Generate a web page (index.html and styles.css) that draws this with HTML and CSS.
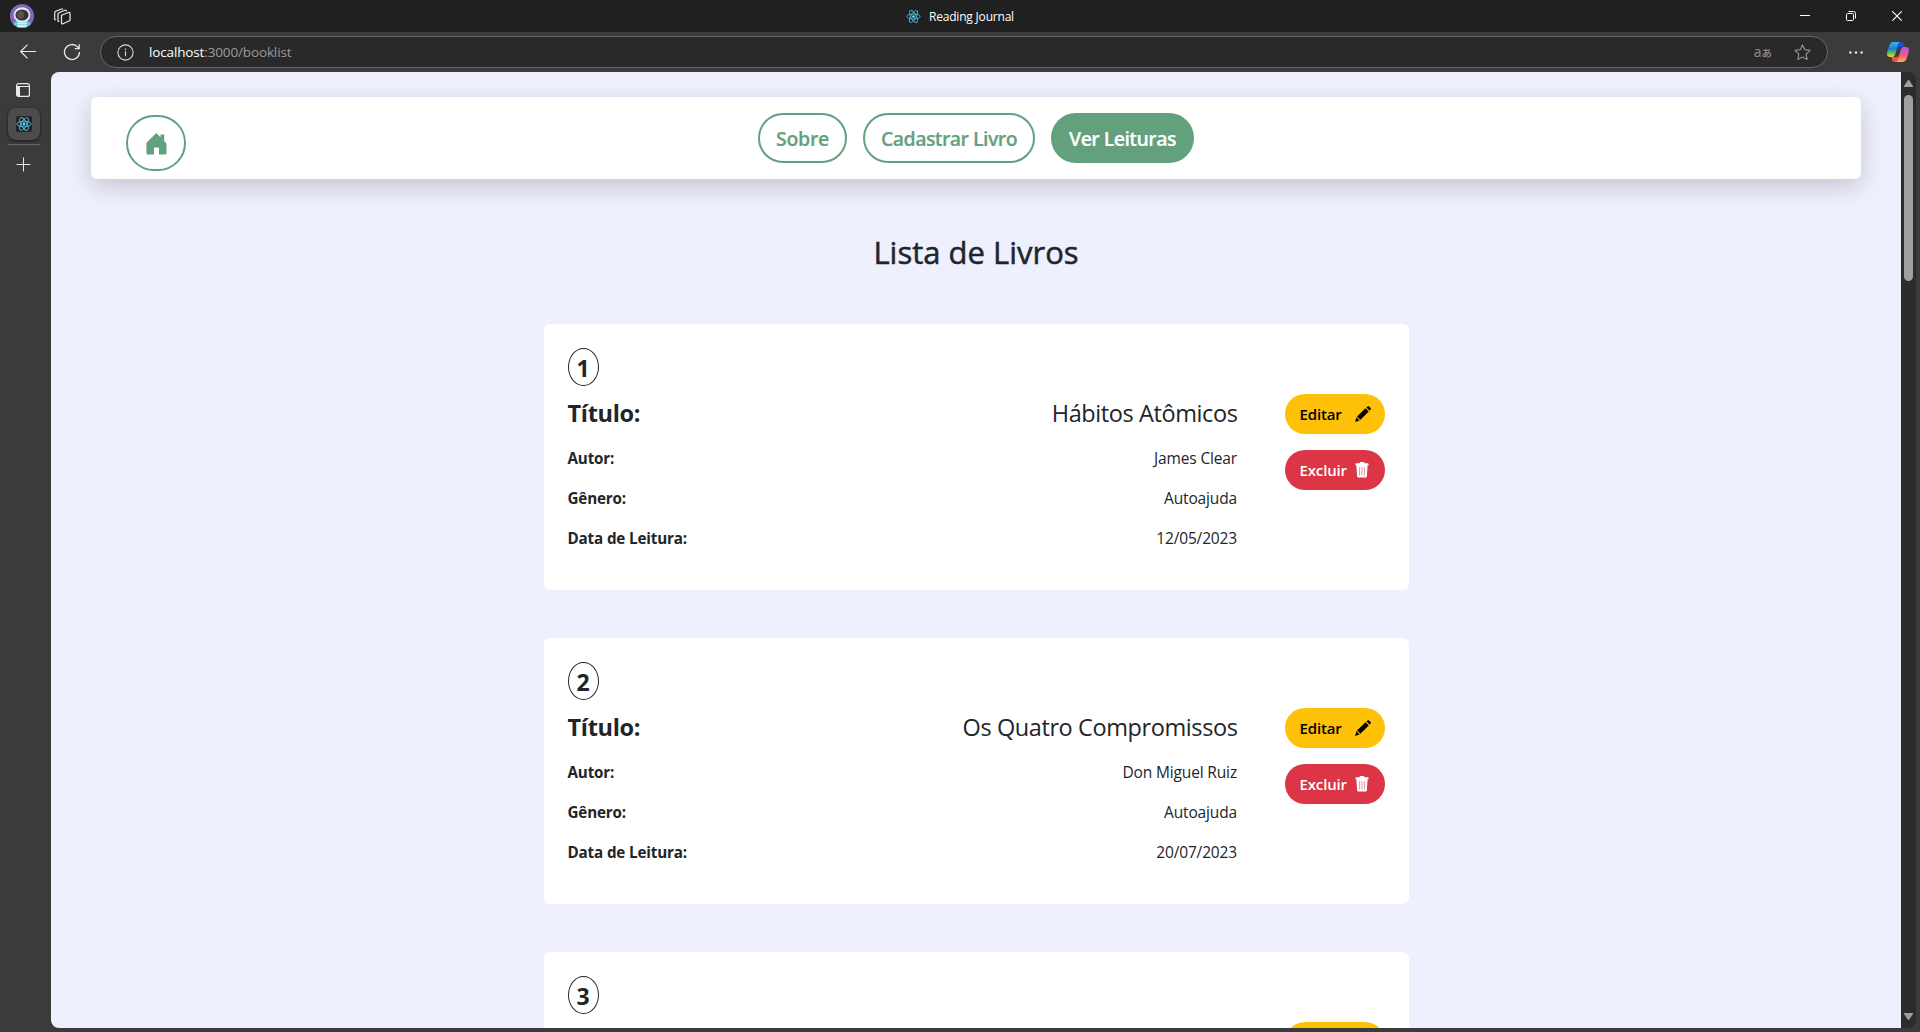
FILE: index.html
```html
<!DOCTYPE html>
<html lang="pt-BR">
<head>
<meta charset="utf-8">
<title>Reading Journal</title>
<link rel="stylesheet" href="styles.css">
</head>
<body>
<svg width="0" height="0" class="defs" aria-hidden="true">
  <symbol id="react" viewBox="0 0 24 24">
    <g fill="none" stroke="#4fb3cf" stroke-width="1.5">
      <ellipse cx="12" cy="12" rx="10.6" ry="4.2"/>
      <ellipse cx="12" cy="12" rx="10.6" ry="4.2" transform="rotate(60 12 12)"/>
      <ellipse cx="12" cy="12" rx="10.6" ry="4.2" transform="rotate(120 12 12)"/>
    </g>
    <circle cx="12" cy="12" r="2.2" fill="#61dafb"/>
  </symbol>
  <symbol id="pencil" viewBox="0 0 16 16">
    <path d="M11.400 1.500 12.600.4q.7-.7 1.400 0l1.700 1.700q.6.7 0 1.300l-1.200 1.200zM10.500 2.300l3.300 3.300L5.400 13.700 2 10.400zM1.400 11.200 4.600 14.400 .1 16z"/>
  </symbol>
  <symbol id="trash" viewBox="0 0 14 16">
    <path d="M4.500 1.200Q4.600 0 5.600 0H8.400Q9.400 0 9.500 1.200H12.600Q13.600 1.200 13.600 2.200V3.200H.4V2.200Q.4 1.200 1.400 1.200zM1.400 3.200H12.600L11.900 14.300Q11.800 15.600 10.500 15.600H3.500Q2.200 15.600 2.100 14.300z"/>
    <path d="M4.600 5.200V13.500M7 5.200V13.500M9.400 5.200V13.500" stroke="#e58a96" stroke-width=".9"/>
  </symbol>
</svg>

<header class="titlebar">
  <div class="titlebar-left">
    <svg width="24" height="24" viewBox="0 0 24 24">
      <clipPath id="round"><circle cx="12" cy="12" r="12"/></clipPath>
      <g clip-path="url(#round)">
        <rect width="24" height="24" fill="#8a63b8"/>
        <path d="M1 24Q3 16 12 16T23 24z" fill="#62c5d8"/>
        <ellipse cx="12" cy="11" rx="8.300" ry="7.700" fill="#d6f2f7"/>
        <ellipse cx="12" cy="11" rx="6.600" ry="5.500" fill="#353433"/>
        <ellipse cx="10.500" cy="11" rx="3.400" ry="4" fill="#5b514e"/>
        <path d="M7 19.500H17M7.500 22H16.500" stroke="#c6f1f7" stroke-width="1.800"/>
      </g>
    </svg>
    <svg width="17" height="17" viewBox="0 0 17 17" fill="none" stroke="#e8e8e8" stroke-width="1.200" stroke-linejoin="round">
      <path d="M7.500 7.200 14.500 4.500Q16 4 16 5.500V12.500L9 15.800Q7.500 16.300 7.500 15z"/>
      <path d="M12.300 3.400V2.800Q12 2 11 2.300L5 4.700Q4 5.200 4 6.200V13.300L5.300 13.800"/>
      <path d="M8.800 1.700Q8.600.5 7.500 1L1.800 3.200Q.7 3.700.7 4.800V11.500L2 12"/>
    </svg>
  </div>
  <div class="titlebar-title">
    <svg width="15" height="15"><use href="#react"/></svg>
    <span>Reading Journal</span>
  </div>
  <div class="window-controls">
    <svg width="10" height="10" viewBox="0 0 10 10"><path d="M0 4.500H10" stroke="#fff"/></svg>
    <svg width="10" height="10" viewBox="0 0 10 10" fill="none" stroke="#fff"><rect x=".5" y="2.500" width="7" height="7" rx="1"/><path d="M2.500.5H7.500Q9.500.5 9.500 2.500V7.500"/></svg>
    <svg width="10" height="10" viewBox="0 0 10 10"><path d="M.3.3 9.700 9.700M9.700.3.3 9.700" stroke="#fff" stroke-width="1.100"/></svg>
  </div>
</header>

<div class="toolbar">
  <svg width="16" height="16" viewBox="0 0 16 16" fill="none" stroke="#e8e8e8" stroke-width="1.200"><path d="M16 7.500H.7M7.500.7.7 7.500 7.500 14.300"/></svg>
  <svg width="18" height="18" viewBox="0 0 18 18" fill="none" stroke="#e8e8e8" stroke-width="1.300"><path d="M16.500 9A7.500 7.500 0 1 1 14.500 3.900L16 5.500M16.200 1.200V5.600H11.800"/></svg>
  <div class="address">
    <svg width="17" height="17" viewBox="0 0 17 17" fill="none" stroke="#d8d8d8" stroke-width="1.100"><circle cx="8.500" cy="8.500" r="7.600"/><path d="M8.500 7.300V12.300M8.500 4.600V6"/></svg>
    <div class="url"><b>localhost</b>:3000/booklist</div>
    <div class="translate"><span>a</span><i>あ</i></div>
    <svg width="17" height="17" viewBox="0 0 17 17" fill="none" stroke="#8f8f8f" stroke-width="1.200" stroke-linejoin="round"><path d="M8.500.9 10.800 5.700 16 6.400 12.200 10.100 13.100 15.500 8.500 13 3.900 15.500 4.800 10.100 1 6.400 6.200 5.700z"/></svg>
  </div>
  <svg class="dots" width="14" height="3" viewBox="0 0 14 3" fill="#e8e8e8"><circle cx="1.400" cy="1.500" r="1.200"/><circle cx="7" cy="1.500" r="1.200"/><circle cx="12.600" cy="1.500" r="1.200"/></svg>
  <svg class="copilot" width="22" height="20" viewBox="0 0 22 20">
    <defs>
      <linearGradient id="cool" x1="0" y1="0" x2="0" y2="1"><stop offset="0" stop-color="#35b8f5"/><stop offset=".45" stop-color="#1782d5"/><stop offset=".7" stop-color="#55b86e"/><stop offset="1" stop-color="#ffd21c"/></linearGradient>
      <linearGradient id="warm" x1="0" y1="0" x2="0" y2="1"><stop offset="0" stop-color="#a955ea"/><stop offset=".55" stop-color="#f45a86"/><stop offset="1" stop-color="#ffad55"/></linearGradient>
    </defs>
    <path d="M11 0H14.500Q16.500 0 17 2.500L17.700 5H13Q11 5 10.300 7z" fill="#1c52d2"/>
    <path d="M11 20H7.500Q5.500 20 5 17.500L4.300 15H9Q11 15 11.700 13z" fill="#f0533f"/>
    <path d="M6 0H12.500Q11.500.6 11 2.500L8 13Q7.300 15 5.300 15H3Q0 15 0 12 0 10 2.500 3 3.600 0 6 0z" fill="url(#cool)"/>
    <path d="M16 20H9.500Q10.500 19.400 11 17.500L14 7Q14.700 5 16.700 5H19Q22 5 22 8 22 10 19.500 17 18.400 20 16 20z" fill="url(#warm)"/>
  </svg>
</div>

<div class="workspace">
  <aside class="sidebar">
    <svg width="14" height="14" viewBox="0 0 14 14"><rect x=".6" y=".6" width="12.800" height="12.800" rx="2" fill="none" stroke="#e8e8e8" stroke-width="1.200"/><path d="M.6 3.500H13.400" stroke="#e8e8e8"/><path d="M.6 3.500H4V13.400H2Q.6 13.400.6 12z" fill="#e8e8e8"/></svg>
    <div class="tab"><div class="favicon"><svg width="16" height="16"><use href="#react"/></svg></div></div>
    <hr>
    <svg width="15" height="15" viewBox="0 0 15 15"><path d="M.5 7.500H14.500M7.500.5V14.500" stroke="#e8e8e8"/></svg>
  </aside>

  <div class="viewport">
    <main class="page">
      <nav class="nav">
        <a class="home">
          <svg width="21" height="22" viewBox="0 0 21 22" fill="#63a17e"><path d="M10.400 0 14.500 4.200V1.500H18.200V8L20.500 10.500V20.300Q20.500 21.500 19.300 21.500H13V15.500Q13 14.500 12 14.500H9Q8 14.500 8 15.500V21.500H1.500Q.4 21.500.4 20.300V9.700z"/></svg>
        </a>
        <div class="links">
          <a class="link sobre">Sobre</a>
          <a class="link cadastrar">Cadastrar Livro</a>
          <a class="link active">Ver Leituras</a>
        </div>
      </nav>

      <h2>Lista de Livros</h2>

      <div class="books">
        <article class="card">
          <div class="info">
            <div class="number">1</div>
            <div class="row title"><strong>Título:</strong><span>Hábitos Atômicos</span></div>
            <div class="row"><strong>Autor:</strong><span>James Clear</span></div>
            <div class="row"><strong>Gênero:</strong><span>Autoajuda</span></div>
            <div class="row"><strong>Data de Leitura:</strong><span>12/05/2023</span></div>
          </div>
          <div class="actions">
            <button class="edit"><span>Editar</span><svg width="16" height="16"><use href="#pencil"/></svg></button>
            <button class="delete"><span>Excluir</span><svg width="14" height="16"><use href="#trash"/></svg></button>
          </div>
        </article>

        <article class="card">
          <div class="info">
            <div class="number">2</div>
            <div class="row title"><strong>Título:</strong><span>Os Quatro Compromissos</span></div>
            <div class="row"><strong>Autor:</strong><span>Don Miguel Ruiz</span></div>
            <div class="row"><strong>Gênero:</strong><span>Autoajuda</span></div>
            <div class="row"><strong>Data de Leitura:</strong><span>20/07/2023</span></div>
          </div>
          <div class="actions">
            <button class="edit"><span>Editar</span><svg width="16" height="16"><use href="#pencil"/></svg></button>
            <button class="delete"><span>Excluir</span><svg width="14" height="16"><use href="#trash"/></svg></button>
          </div>
        </article>

        <article class="card">
          <div class="info">
            <div class="number">3</div>
          </div>
          <div class="actions">
            <button class="edit"></button>
          </div>
        </article>
      </div>
    </main>

    <div class="scrollbar">
      <svg width="9" height="7" viewBox="0 0 9 7" fill="#9f9f9f"><path d="M3.700.5Q4.500-.4 5.300.5L9 6V7H0V6z"/></svg>
      <div class="thumb"></div>
      <svg class="down" width="9" height="7" viewBox="0 0 9 7" fill="#9f9f9f"><path d="M3.700 6.500Q4.500 7.400 5.300 6.500L9 1V0H0V1z"/></svg>
    </div>
  </div>
</div>
</body>
</html>
```
FILE: styles.css
```css
* { box-sizing: border-box; }

body {
  margin: 0;
  height: 1032px;
  overflow: hidden;
  display: flex;
  flex-direction: column;
  background: #3b3b3b;
  color: #212529;
  font-family: "Open Sans", "Noto Sans", sans-serif;
  font-size: 15.500px;
}

svg { display: block; flex: none; }
.defs { display: none; }

/* Browser frame */
.titlebar {
  flex: none;
  height: 32px;
  display: grid;
  grid-template-columns: 1fr auto 1fr;
  align-items: center;
  background: #202020;
}
.titlebar-left {
  display: flex;
  align-items: center;
  gap: 20px;
  padding-left: 10px;
}
.titlebar-title {
  display: flex;
  align-items: center;
  gap: 8px;
  color: #fff;
  font-size: 12px;
  letter-spacing: -0.2px;
  white-space: nowrap;
}
.window-controls {
  display: flex;
  justify-content: flex-end;
  gap: 36px;
  padding-right: 18px;
}

.toolbar {
  flex: none;
  height: 40px;
  display: flex;
  align-items: center;
  padding: 0 11px 0 20px;
  gap: 27px;
}
.address {
  width: 1728px;
  height: 32px;
  margin-left: -8px;
  display: flex;
  align-items: center;
  border: 1px solid #686868;
  border-radius: 16px;
  background: #292929;
  padding: 0 16px 0 16px;
}
.url {
  flex: 1;
  margin-left: 15px;
  color: #9a9a9a;
  font-size: 13.500px;
  letter-spacing: -0.14px;
}
.url b { font-weight: 400; color: #fff; }
.translate {
  display: flex;
  align-items: baseline;
  margin-right: 22px;
  color: #8f8f8f;
  font-size: 14px;
  line-height: 20px;
}
.translate i {
  font: 500 10.500px/20px "Noto Sans CJK JP", sans-serif;
}
.dots { margin-left: -6px; }
.copilot { margin-left: -3px; }

.workspace {
  flex: 1;
  min-height: 0;
  display: flex;
  padding: 0 4px 4px 0;
}
.sidebar {
  width: 51px;
  padding: 11px 0 0 8px;
  display: flex;
  flex-direction: column;
}
.sidebar > svg { margin-left: 8px; }
.tab {
  width: 32px;
  height: 32px;
  margin-top: 11px;
  padding: 8px;
  border-radius: 8px;
  background: #4c4c4c;
  box-shadow: 0 1px 3px rgba(0, 0, 0, .6);
}
.favicon {
  width: 16px;
  height: 16px;
  border-radius: 2px;
  background: #232323;
}
.sidebar hr {
  width: 32px;
  height: 1px;
  margin: 4px 0 12px;
  border: 0;
  background: #666;
}

.viewport {
  flex: 1;
  display: flex;
  overflow: hidden;
  border-radius: 8px;
}
.scrollbar {
  width: 15px;
  display: flex;
  flex-direction: column;
  align-items: center;
  padding: 8px 0;
  background: #2c2c2c;
}
.thumb {
  width: 9px;
  height: 186px;
  margin-top: 8px;
  border-radius: 5px;
  background: #9f9f9f;
}
.down { margin-top: auto; }

/* Page */
.page {
  flex: 1;
  padding: 25px 40px 0;
  background: #eef0fe;
  overflow: hidden;
}
.nav {
  height: 82px;
  display: grid;
  grid-template-columns: 1fr auto 1fr;
  padding: 16px 35px 0;
  border-radius: 6px;
  background: #fff;
  box-shadow: 0 8px 24px rgba(30, 0, 10, .18);
}
.home {
  width: 60px;
  height: 56px;
  margin-top: 2px;
  padding: 16px 0 0 17.500px;
  border: 2px solid #63a17e;
  border-radius: 28px;
}
.links { display: flex; gap: 16px; }
.link {
  height: 50px;
  display: flex;
  justify-content: center;
  align-items: center;
  border: 2px solid #63a17e;
  border-radius: 25px;
  color: #63a17e;
  font-size: 19.500px;
  font-weight: 600;
  letter-spacing: -0.55px;
  width: 132px;
  white-space: nowrap;
  -webkit-text-stroke: 0.2px currentColor;
}
.sobre { width: 89px; letter-spacing: -0.3px; }
.cadastrar { width: 172px; }
.active { background: #63a17e; color: #fff; width: 143px; }

h2 {
  margin: 53px 0 0;
  height: 40px;
  font-size: 31px;
  font-weight: 500;
  line-height: 40px;
  text-align: center;
  -webkit-text-stroke: 0.5px #212529;
}

.books {
  display: flex;
  flex-direction: column;
  align-items: center;
  gap: 48px;
  margin-top: 52px;
}
.card {
  width: 865px;
  height: 266px;
  display: flex;
  gap: 48px;
  padding: 24px;
  border-radius: 6px;
  background: #fff;
}
.info { width: 669px; }
.number {
  width: 31px;
  height: 38px;
  border: 1px solid #212529;
  border-radius: 50%;
  font-size: 23px;
  font-weight: 700;
  line-height: 39px;
  text-align: center;
}
.row {
  height: 40px;
  display: flex;
  justify-content: space-between;
  align-items: center;
}
.row strong { font-size: 15.200px; letter-spacing: -0.15px; }
.row span { margin-right: -0.5px; letter-spacing: -0.15px; }
.row.title {
  height: 54px;
  margin-bottom: -2px;
  font-size: 23.500px;
}
.row.title strong { font-size: 23.500px; letter-spacing: -0.3px; }
.row.title span { margin-right: -1px; letter-spacing: -0.4px; }
.actions {
  width: 100px;
  padding-top: 46px;
  display: flex;
  flex-direction: column;
  gap: 16px;
}
button {
  height: 40px;
  display: flex;
  justify-content: space-between;
  align-items: center;
  border: 0;
  border-radius: 20px;
  padding: 0 14px 0 15px;
  font: 600 15px "Open Sans", sans-serif;
  letter-spacing: -0.15px;
}
.edit { background: #ffc107; color: #000; fill: #000; }
.delete { background: #dc3545; color: #fff; fill: #fff; padding-right: 15.500px; }
```
